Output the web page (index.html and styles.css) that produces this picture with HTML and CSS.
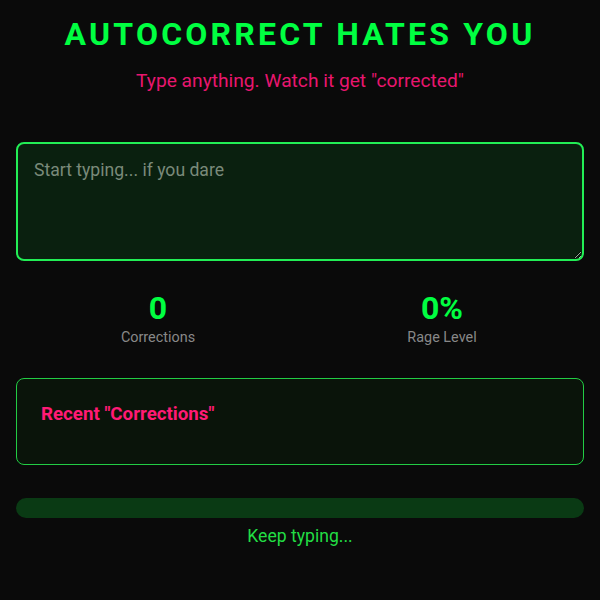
FILE: index.html
```html
<!DOCTYPE html>
<html>
<head>
<meta charset="utf-8">
<link rel="stylesheet" href="styles.css">
</head>
<body>
<div class="app">
  <h1 class="title">AUTOCORRECT HATES YOU</h1>
  <p class="subtitle">Type anything. Watch it get "corrected"</p>
  <textarea class="input" placeholder="Start typing... if you dare"></textarea>
  <div class="stats">
    <div class="stat">
      <div class="stat-value">0</div>
      <div class="stat-label">Corrections</div>
    </div>
    <div class="stat">
      <div class="stat-value">0%</div>
      <div class="stat-label">Rage Level</div>
    </div>
  </div>
  <div class="history">
    <h3 class="history-title">Recent "Corrections"</h3>
  </div>
  <div class="bar"></div>
  <div class="status">Keep typing...</div>
</div>
</body>
</html>
```
FILE: styles.css
```css
* { box-sizing: border-box; }
html, body { margin: 0; padding: 0; background: #0a0a0a; }
body { font-family: Roboto, "Noto Sans", sans-serif; color: #00ff41; }
.app { padding: 15px 16px; display: flex; flex-direction: column; }
.title {
  margin: 0;
  text-align: center;
  font-size: 32px;
  font-weight: 700;
  letter-spacing: 3.2px;
  line-height: 38px;
  color: #00ff41;
}
.subtitle {
  margin: 16px 0 0;
  text-align: center;
  font-size: 19.2px;
  line-height: 23px;
  color: #e8166f;
}
.input {
  margin-top: 50px;
  width: 100%;
  height: 119px;
  background: #0a200f;
  border: 2px solid #22ee55;
  border-radius: 8px;
  padding: 16px;
  font-family: Roboto, sans-serif;
  font-size: 17.6px;
  color: #ddd;
  resize: vertical;
  outline: none;
}
.input::placeholder { color: #7a8a7a; }
.stats { display: flex; margin-top: 28px; }
.stat { flex: 1; text-align: center; }
.stat-value { font-size: 32px; font-weight: 700; line-height: 38px; color: #00ff41; }
.stat-label { font-size: 14.4px; line-height: 18px; color: #888; margin-top: 2px; }
.history {
  margin-top: 31px;
  height: 87px;
  border: 1px solid #22cc44;
  border-radius: 8px;
  background: #0a140a;
  padding: 24px;
}
.history-title { margin: 0; font-size: 18.72px; font-weight: 700; line-height: 22px; color: #ff1a75; }
.bar { margin-top: 33px; height: 20px; border-radius: 10px; background: #0a3a14; }
.status { text-align: center; margin-top: 8px; font-size: 17.6px; line-height: 21px; color: #22dd44; }
```
